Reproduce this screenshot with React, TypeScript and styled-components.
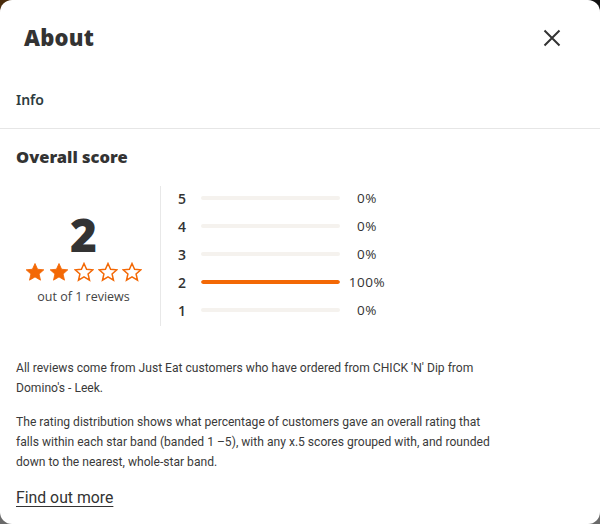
import React from "react";
import styled, { createGlobalStyle } from "styled-components";

const Global = createGlobalStyle`
  html, body { margin: 0; padding: 0; }
  body {
    width: 600px; height: 524px; overflow: hidden;
    background: linear-gradient(90deg, #4a2c0c 0%, #1a1a1a 50%, #111 100%);
  }
  #root { width: 600px; height: 524px; background: linear-gradient(180deg, transparent 0%, transparent 50%, #6a6a6a 50%, #6a6a6a 100%); }
`;

const Modal = styled.div`
  width: 600px;
  height: 524px;
  box-sizing: border-box;
  background: #fff;
  border-radius: 12px;
  display: flex;
  flex-direction: column;
  font-family: Roboto, "Noto Sans", sans-serif;
  color: #333;
`;

const Header = styled.header`
  display: flex;
  align-items: center;
  justify-content: space-between;
  height: 76px;
  padding: 0 36px 0 24px;
  box-sizing: border-box;
`;

const Title = styled.h1`
  margin: 0 0 2px;
  font-family: "Noto Sans", sans-serif;
  font-weight: 900;
  font-size: 22px;
  letter-spacing: 0.2px;
  color: #333;
`;

const CloseButton = styled.button`
  border: 0;
  background: none;
  padding: 0;
  width: 24px;
  height: 24px;
  display: flex;
  align-items: center;
  justify-content: center;
  cursor: pointer;
`;

const Tabs = styled.nav`
  height: 53px;
  display: flex;
  align-items: center;
  padding: 0 16px;
  border-bottom: 1px solid #e6e6e6;
  box-sizing: border-box;
`;

const Tab = styled.span`
  font-family: "Noto Sans", sans-serif;
  font-size: 14px;
  font-weight: 600;
  color: #2d3b40;
  margin-top: -5px;
`;

const Content = styled.main`
  padding: 16px 16px 0;
`;

const SectionTitle = styled.h2`
  margin: 0;
  font-family: "Noto Sans", sans-serif;
  font-weight: 900;
  font-size: 16.5px;
  color: #333;
  line-height: 24px;
`;

const ScoreSection = styled.section`
  display: flex;
  margin-top: 17px;
`;

const ScoreSummary = styled.div`
  width: 145px;
  padding-right: 9px;
  border-right: 1px solid #e8e8e8;
  display: flex;
  flex-direction: column;
  align-items: center;
  justify-content: center;
  padding-top: 4px;
  box-sizing: border-box;
`;

const BigScore = styled.div`
  font-family: "Noto Sans", sans-serif;
  font-weight: 900;
  font-size: 46px;
  line-height: 46px;
  color: #333;
`;

const Stars = styled.div`
  display: flex;
  gap: 4.3px;
  margin-top: 5px;
`;

const ReviewCount = styled.div`
  font-family: "Open Sans", sans-serif;
  font-size: 12.5px;
  color: #444;
  margin-top: 6px;
`;

const Bars = styled.div`
  display: flex;
  flex-direction: column;
  padding-left: 17px;
  margin-top: -2px;
  margin-bottom: 2px;
`;

const BarRow = styled.div`
  display: flex;
  align-items: center;
  height: 28px;
`;

const BarLabel = styled.span`
  width: 23px;
  font-family: "Open Sans", sans-serif;
  font-weight: 600;
  font-size: 14px;
  color: #333;
`;

const Track = styled.div`
  width: 139px;
  height: 4px;
  border-radius: 2px;
  background: #f5f2ee;
  overflow: hidden;
`;

const Fill = styled.div`
  height: 100%;
  background: #f36805;
  border-radius: 2px;
`;

const Percent = styled.span`
  width: 42px;
  margin-left: 6px;
  text-align: center;
  font-family: "Open Sans", sans-serif;
  font-size: 13.5px;
  color: #333;
  letter-spacing: 0.5px;
`;

const Paragraph = styled.p`
  margin: 32px 0 0;
  max-width: 490px;
  font-size: 12.1px;
  line-height: 20px;
  color: #3a3a3a;
  & + & { margin-top: 14px; }
`;

const MoreLink = styled.a`
  display: inline-block;
  margin-top: 16px;
  font-size: 15.8px;
  color: #333;
  text-decoration: underline;
  text-underline-offset: 3px;
`;

const StarIcon = ({ filled }: { filled: boolean }) => (
  <svg width="20" height="20" viewBox="0 0 24 24">
    <path
      d="M12 1.8l3.1 6.9 7.5.7-5.7 5 1.7 7.4L12 17.9l-6.6 3.9 1.7-7.4-5.7-5 7.5-.7z"
      fill={filled ? "#f36805" : "none"}
      stroke="#f36805"
      strokeWidth={filled ? 1 : 1.8}
      strokeLinejoin="miter"
    />
  </svg>
);

const distribution = [
  { star: 5, pct: 0 },
  { star: 4, pct: 0 },
  { star: 3, pct: 0 },
  { star: 2, pct: 100 },
  { star: 1, pct: 0 },
];

export default function App() {
  return (
    <>
      <Global />
      <Modal>
        <Header>
          <Title>About</Title>
          <CloseButton aria-label="Close">
            <svg width="18" height="18" viewBox="0 0 18 18">
              <path d="M1.5 1.5L16.5 16.5M16.5 1.5L1.5 16.5" stroke="#333" strokeWidth="2" />
            </svg>
          </CloseButton>
        </Header>
        <Tabs>
          <Tab>Info</Tab>
        </Tabs>
        <Content>
          <SectionTitle>Overall score</SectionTitle>
          <ScoreSection>
            <ScoreSummary>
              <BigScore>2</BigScore>
              <Stars>
                {[1, 2, 3, 4, 5].map((i) => (
                  <StarIcon key={i} filled={i <= 2} />
                ))}
              </Stars>
              <ReviewCount>out of 1 reviews</ReviewCount>
            </ScoreSummary>
            <Bars>
              {distribution.map((d) => (
                <BarRow key={d.star}>
                  <BarLabel>{d.star}</BarLabel>
                  <Track>
                    <Fill style={{ width: `${d.pct}%` }} />
                  </Track>
                  <Percent>{d.pct}%</Percent>
                </BarRow>
              ))}
            </Bars>
          </ScoreSection>
          <Paragraph>
            All reviews come from Just Eat customers who have ordered from CHICK 'N' Dip from
            Domino's - Leek.
          </Paragraph>
          <Paragraph>
            The rating distribution shows what percentage of customers gave an overall rating that
            falls within each star band (banded 1 –5), with any x.5 scores grouped with, and rounded
            down to the nearest, whole-star band.
          </Paragraph>
          <MoreLink href="#">Find out more</MoreLink>
        </Content>
      </Modal>
    </>
  );
}
